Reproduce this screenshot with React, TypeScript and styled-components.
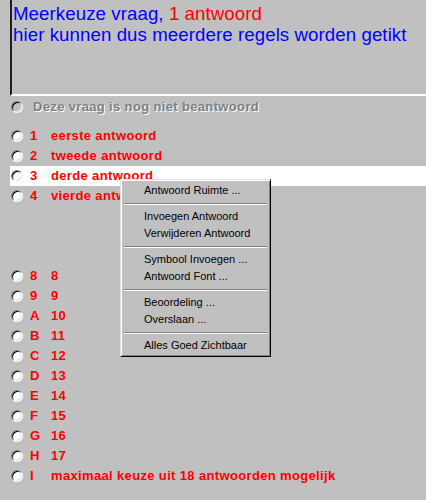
import React from "react";
import styled, { createGlobalStyle } from "styled-components";

const Global = createGlobalStyle`
  html, body { margin: 0; padding: 0; background: #c0c0c0; }
  body { width: 426px; height: 500px; overflow: hidden; }
`;

const Page = styled.div`
  position: relative;
  width: 426px;
  height: 500px;
  background: #c0c0c0;
  font-family: "Liberation Sans", Arial, sans-serif;
`;

const Question = styled.div`
  margin-left: 10px;
  height: 96px;
  box-sizing: border-box;
  border-left: 2px solid #202020;
  border-bottom: 2px solid #ffffff;
  padding: 3px 0 0 1px;
  font-size: 18.67px;
  line-height: 21px;
  letter-spacing: 0.08px;
  color: #0000ff;
`;

const Red = styled.span`
  color: #ff0000;
`;

const List = styled.div`
  display: flex;
  flex-direction: column;
  margin-left: 10px;
`;

const Row = styled.div<{ $selected?: boolean; $gapBefore?: number }>`
  display: flex;
  align-items: center;
  height: 20px;
  padding-left: 1px;
  margin-top: ${(p) => p.$gapBefore ?? 0}px;
  background: ${(p) => (p.$selected ? "#ffffff" : "transparent")};
  font-size: 13px;
  font-weight: bold;
  line-height: 20px;
  color: #ff0000;
  letter-spacing: 0.35px;
`;

const Radio = styled.span<{ $disabled?: boolean }>`
  flex: none;
  width: 12px;
  height: 12px;
  box-sizing: border-box;
  border-radius: 50%;
  border: 1px solid;
  border-color: #808080 #ffffff #ffffff #808080;
  box-shadow: inset 1px 1px #000000, inset -1px -1px #dfdfdf;
  background: ${(p) => (p.$disabled ? "#c0c0c0" : "#ffffff")};
`;

const Label = styled.span`
  width: 21px;
  margin-left: 7px;
  flex: none;
`;

const Disabled = styled.span`
  margin-left: 10px;
  color: #808080;
  text-shadow: 1px 1px 0 #ffffff;
`;

const Menu = styled.div`
  position: absolute;
  left: 120px;
  top: 179px;
  width: 151px;
  box-sizing: border-box;
  border: 1px solid;
  border-color: #dfdfdf #000000 #000000 #dfdfdf;
  box-shadow: inset 1px 1px #ffffff, inset -1px -1px #808080;
  padding: 2px;
  background: #c0c0c0;
  font-family: "Liberation Sans", Arial, sans-serif;
  font-size: 11px;
  color: #000000;
`;

const Item = styled.div`
  height: 17px;
  line-height: 17px;
  padding-left: 21px;
  white-space: nowrap;
`;

const Sep = styled.div`
  height: 9px;
  display: flex;
  align-items: center;
  padding: 0 1px;
  &::after {
    content: "";
    flex: 1;
    height: 0;
    border-top: 1px solid #808080;
    border-bottom: 1px solid #ffffff;
  }
`;

const rowsTop = [
  ["1", "eerste antwoord"],
  ["2", "tweede antwoord"],
  ["3", "derde antwoord"],
  ["4", "vierde antwoord"],
];

const rowsBottom = [
  ["8", "8"],
  ["9", "9"],
  ["A", "10"],
  ["B", "11"],
  ["C", "12"],
  ["D", "13"],
  ["E", "14"],
  ["F", "15"],
  ["G", "16"],
  ["H", "17"],
  ["I", "maximaal keuze uit 18 antwoorden mogelijk"],
];

export default function App() {
  return (
    <Page>
      <Global />
      <Question>
        Meerkeuze vraag, <Red>1 antwoord</Red>
        <br />
        hier kunnen dus meerdere regels worden getikt
      </Question>
      <List>
        <Row $gapBefore={1}>
          <Radio $disabled />
          <Disabled>Deze vraag is nog niet beantwoord</Disabled>
        </Row>
        {rowsTop.map(([k, t], i) => (
          <Row key={k} $selected={k === "3"} $gapBefore={i === 0 ? 9 : 0}>
            <Radio />
            <Label>{k}</Label>
            <span>{t}</span>
          </Row>
        ))}
        {rowsBottom.map(([k, t], i) => (
          <Row key={k} $gapBefore={i === 0 ? 60 : 0}>
            <Radio />
            <Label>{k}</Label>
            <span>{t}</span>
          </Row>
        ))}
      </List>
      <Menu>
        <Item>Antwoord Ruimte ...</Item>
        <Sep />
        <Item>Invoegen Antwoord</Item>
        <Item>Verwijderen Antwoord</Item>
        <Sep />
        <Item>Symbool Invoegen ...</Item>
        <Item>Antwoord Font ...</Item>
        <Sep />
        <Item>Beoordeling ...</Item>
        <Item>Overslaan ...</Item>
        <Sep />
        <Item>Alles Goed Zichtbaar</Item>
      </Menu>
    </Page>
  );
}
